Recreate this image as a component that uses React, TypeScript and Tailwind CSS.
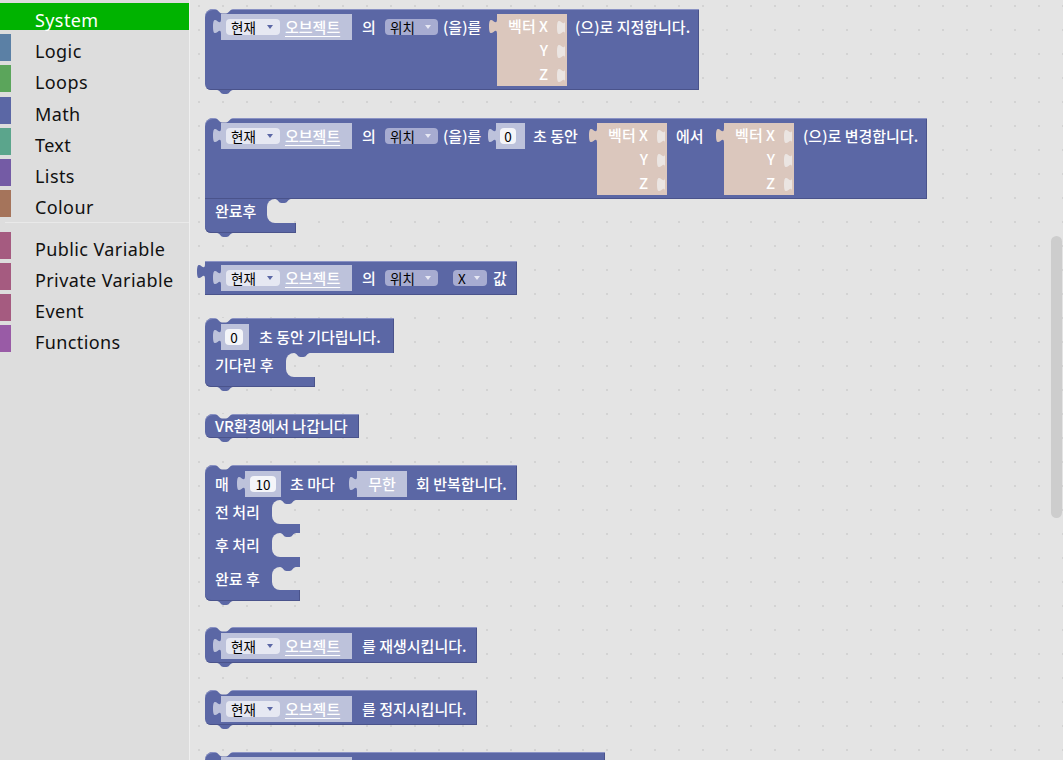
import type { ReactNode } from 'react';

const BLUE = '#5b67a5';
const SHADOW = '#bdc2db';
const TAN = '#dbc7bd';

const categories = [
  { name: 'Logic', color: 'bg-[#5b80a5]' },
  { name: 'Loops', color: 'bg-[#5ba55b]' },
  { name: 'Math', color: 'bg-[#5b67a5]' },
  { name: 'Text', color: 'bg-[#5ba58c]' },
  { name: 'Lists', color: 'bg-[#745ba5]' },
  { name: 'Colour', color: 'bg-[#a5745b]' },
];

const variables = [
  { name: 'Public Variable', color: 'bg-[#a55b80]' },
  { name: 'Private Variable', color: 'bg-[#a55b80]' },
  { name: 'Event', color: 'bg-[#a55b80]' },
  { name: 'Functions', color: 'bg-[#995ba6]' },
];

// puzzle tab "(" used for value inputs
function InTab({ fill, cls = '' }: { fill: string; cls?: string }) {
  return (
    <svg width="8" height="21" viewBox="0 0 8 21" className={`shrink-0 overflow-visible ${cls}`}>
      <path d="M8 5 C8 15 0 -3 0 12.5 C0 28 8 10 8 20 Z" fill={fill} />
    </svg>
  );
}

// notch cut into the top of a statement block
function Dip() {
  return (
    <svg width="18" height="5" viewBox="0 0 18 5" className="absolute top-0 left-[10px]">
      <path d="M0 0 C3 0 4 4.5 7 4.5 H11 C14 4.5 15 0 18 0 Z" fill="#e4e4e4" />
    </svg>
  );
}

// tab hanging below a statement block / into a statement input
function Tab({ cls }: { cls: string }) {
  return (
    <svg width="16" height="4" viewBox="0 0 16 4" className={`absolute ${cls}`}>
      <path d="M0 0 C3 0 3.5 4 6.5 4 H9.5 C12.5 4 13 0 16 0 Z" fill={BLUE} />
    </svg>
  );
}

function Arrow({ fill }: { fill: string }) {
  return (
    <svg width="6" height="4" viewBox="0 0 6 4" className="shrink-0">
      <path d="M0 0 H6 L3 4 Z" fill={fill} />
    </svg>
  );
}

const WHITE_TXT = 'text-[15px] leading-[18px] font-medium whitespace-nowrap text-white';

function Txt({ cls, children }: { cls: string; children: ReactNode }) {
  return <span className={`flex h-[26px] shrink-0 items-center ${WHITE_TXT} ${cls}`}>{children}</span>;
}

function Drop({ label, light = false, cls }: { label: string; light?: boolean; cls: string }) {
  return (
    <span className={`flex h-[26px] shrink-0 items-center ${cls}`}>
      <span
        className={`flex h-[16px] w-full items-center justify-between rounded-[4px] pr-[7px] pl-[5px] ${
          light ? 'bg-[#e6e8f2]' : 'bg-[#a7acd1]'
        }`}
      >
        <span className="text-[13.5px] leading-[16px] whitespace-nowrap text-black">{label}</span>
        <Arrow fill={light ? BLUE : '#e6e8f4'} />
      </span>
    </span>
  );
}

function Shadow({ outer = '', cls, children }: { outer?: string; cls: string; children?: ReactNode }) {
  return (
    <div className={`flex shrink-0 items-start ${outer}`}>
      <InTab fill={SHADOW} />
      <div className={`flex h-[26px] items-center bg-[#bdc2db] ${cls}`}>{children}</div>
    </div>
  );
}

function ObjBlock() {
  return (
    <Shadow cls="w-[131px]">
      <Drop label="현재" light cls="ml-[5px] w-[54px]" />
      <span className={`ml-[5px] underline underline-offset-[3px] ${WHITE_TXT}`}>오브젝트</span>
    </Shadow>
  );
}

function NumPill({ value, cls }: { value: string; cls: string }) {
  return (
    <span
      className={`flex h-[16px] items-center justify-center rounded-[4px] bg-[#f4f5f9] text-[13.5px] leading-[16px] text-black ${cls}`}
    >
      {value}
    </span>
  );
}

function Vec({ outer }: { outer: string }) {
  return (
    <div className={`flex shrink-0 items-start ${outer}`}>
      <InTab fill={TAN} />
      <div className="flex h-[72px] w-[70px] flex-col bg-[#dbc7bd]">
        {['벡터 X', 'Y', 'Z'].map((row) => (
          <div key={row} className="flex h-[24px] items-start justify-end">
            <span className={`flex h-[24px] items-center ${WHITE_TXT}`}>{row}</span>
            <InTab fill="#ebe5e2" cls="mt-[1px] mr-[2px] ml-[9px]" />
          </div>
        ))}
      </div>
    </div>
  );
}

function Block({ mt, children, notch = true }: { mt: string; children: ReactNode; notch?: boolean }) {
  return (
    <div className={`relative w-fit ${mt}`}>
      {children}
      {notch && <Dip />}
      {notch && <Tab cls="top-full left-[12px]" />}
    </div>
  );
}

function Arm({ label, labelW, h, tabLeft }: { label: string; labelW: string; h: string; tabLeft: string }) {
  return (
    <div className={`relative flex ${h}`}>
      <div className={`flex items-center bg-[#5b67a5] pl-[10px] ${WHITE_TXT} ${labelW}`}>{label}</div>
      <div className="w-[8px] bg-[#5b67a5]">
        <div className="h-full w-full rounded-l-[8px] bg-[#e4e4e4]" />
      </div>
      <Tab cls={`top-0 ${tabLeft}`} />
    </div>
  );
}

const TOP_EDGE = 'shadow-[inset_0_1px_0_#8a92c4,inset_-1px_0_0_#4a538b]';
const FULL_EDGE = 'shadow-[inset_0_1px_0_#8a92c4,inset_-1px_-1px_0_#4a538b]';
const BOTTOM_EDGE = 'shadow-[inset_0_-1px_0_#4a538b,inset_-1px_0_0_#4a538b]';

function Sidebar() {
  const label = "text-[18px] leading-[35px] tracking-[0.4px] whitespace-nowrap font-['Noto_Sans',sans-serif]";
  return (
    <div className="h-full w-[190px] shrink-0 border-r border-[#efefef] bg-[#dddddd] pt-[3px]">
      <div className={`mb-[4px] h-[27px] bg-[#00b300] pl-[35px] text-white ${label}`}>System</div>
      {categories.map((c) => (
        <div key={c.name} className="mb-[4.25px] flex h-[27px]">
          <div className={`h-full w-[11px] ${c.color}`} />
          <span className={`pl-[24px] text-[#111] ${label}`}>{c.name}</span>
        </div>
      ))}
      <div className="mt-[3px] mb-[9px] ml-[5px] h-px bg-[#e9e9e9]" />
      {variables.map((c) => (
        <div key={c.name} className="mb-[4.25px] flex h-[27px]">
          <div className={`h-full w-[11px] ${c.color}`} />
          <span className={`pl-[24px] text-[#111] ${label}`}>{c.name}</span>
        </div>
      ))}
    </div>
  );
}

function Flyout() {
  return (
    <div className="relative h-full flex-1 overflow-hidden bg-[#e4e4e4] bg-[radial-gradient(circle,#d3d3d3_1px,transparent_1.5px)] bg-size-[24px_24px] bg-position-[-3px_-6px] font-['Noto_Sans_CJK_KR','Noto_Sans',sans-serif]">
      <div className="flex flex-col items-start pt-[9px] pl-[15px]">
        {/* set position */}
        <Block mt="mt-0">
          <div className={`flex h-[81px] w-[494px] items-start rounded-tl-[8px] rounded-bl-[6px] bg-[#5b67a5] pt-[5px] pl-[8px] ${FULL_EDGE}`}>
            <ObjBlock />
            <Txt cls="ml-[10px] w-[13px]">의</Txt>
            <Drop label="위치" cls="ml-[10px] w-[53px]" />
            <Txt cls="ml-[5px] w-[36px]">(을)를</Txt>
            <Vec outer="ml-[10px]" />
            <Txt cls="ml-[8px] w-[114px]">(으)로 지정합니다.</Txt>
          </div>
        </Block>

        {/* change position over time */}
        <Block mt="mt-[28px]">
          <div className={`flex h-[81px] w-[722px] items-start rounded-tl-[8px] bg-[#5b67a5] pt-[5px] pl-[8px] ${FULL_EDGE}`}>
            <ObjBlock />
            <Txt cls="ml-[10px] w-[13px]">의</Txt>
            <Drop label="위치" cls="ml-[10px] w-[53px]" />
            <Txt cls="ml-[5px] w-[36px]">(을)를</Txt>
            <Shadow outer="ml-[9px]" cls="w-[29px]">
              <NumPill value="0" cls="ml-[4px] w-[16px]" />
            </Shadow>
            <Txt cls="ml-[8px] w-[45px]">초 동안</Txt>
            <Vec outer="ml-[11px]" />
            <Txt cls="ml-[9px] w-[26px]">에서</Txt>
            <Vec outer="ml-[14px]" />
            <Txt cls="ml-[9px] w-[115px]">(으)로 변경합니다.</Txt>
          </div>
          <Arm label="완료후" labelW="w-[62px]" h="h-[24px]" tabLeft="left-[70px]" />
          <div className={`h-[10px] w-[91px] rounded-bl-[6px] bg-[#5b67a5] ${BOTTOM_EDGE}`} />
        </Block>

        {/* get position value */}
        <Block mt="mt-[28px]" notch={false}>
          <div className={`flex h-[34px] w-[312px] items-start bg-[#5b67a5] pt-[4px] pl-[8px] ${FULL_EDGE}`}>
            <ObjBlock />
            <Txt cls="ml-[10px] w-[13px]">의</Txt>
            <Drop label="위치" cls="ml-[10px] w-[53px]" />
            <Drop label="X" cls="ml-[15px] w-[34px]" />
            <Txt cls="ml-[6px] w-[13px]">값</Txt>
          </div>
          <InTab fill={BLUE} cls="absolute top-[-2px] left-[-8px]" />
        </Block>

        {/* wait */}
        <Block mt="mt-[23px]">
          <div className={`flex h-[35px] w-[189px] items-start rounded-tl-[8px] bg-[#5b67a5] pt-[6px] pl-[8px] ${TOP_EDGE}`}>
            <Shadow cls="w-[28px]">
              <NumPill value="0" cls="ml-[4px] w-[18px]" />
            </Shadow>
            <Txt cls="ml-[10px] w-[125px]">초 동안 기다립니다.</Txt>
          </div>
          <Arm label="기다린 후" labelW="w-[81px]" h="h-[24px]" tabLeft="left-[89px]" />
          <div className={`h-[10px] w-[110px] rounded-bl-[6px] bg-[#5b67a5] ${BOTTOM_EDGE}`} />
        </Block>

        {/* exit VR */}
        <Block mt="mt-[27px]">
          <div className={`flex h-[24px] w-[154px] items-center rounded-tl-[8px] rounded-bl-[6px] bg-[#5b67a5] pl-[10px] ${FULL_EDGE}`}>
            <span className={WHITE_TXT}>VR환경에서 나갑니다</span>
          </div>
        </Block>

        {/* repeat every n seconds */}
        <Block mt="mt-[27px]">
          <div className={`flex h-[35px] w-[312px] items-start rounded-tl-[8px] bg-[#5b67a5] pt-[6px] pl-[10px] ${TOP_EDGE}`}>
            <Txt cls="w-[13px]">매</Txt>
            <Shadow outer="ml-[9px]" cls="w-[36px]">
              <NumPill value="10" cls="ml-[5px] w-[26px]" />
            </Shadow>
            <Txt cls="ml-[9px] w-[46px]">초 마다</Txt>
            <Shadow outer="ml-[13px]" cls="w-[50px] justify-center">
              <span className={WHITE_TXT}>무한</span>
            </Shadow>
            <Txt cls="ml-[9px] w-[91px]">회 반복합니다.</Txt>
          </div>
          <Arm label="전 처리" labelW="w-[67px]" h="h-[24px]" tabLeft="left-[75px]" />
          <div className="h-[9px] w-[95px] bg-[#5b67a5]" />
          <Arm label="후 처리" labelW="w-[67px]" h="h-[24px]" tabLeft="left-[75px]" />
          <div className="h-[10px] w-[95px] bg-[#5b67a5]" />
          <Arm label="완료 후" labelW="w-[67px]" h="h-[23px]" tabLeft="left-[75px]" />
          <div className={`h-[11px] w-[95px] rounded-bl-[6px] bg-[#5b67a5] ${BOTTOM_EDGE}`} />
        </Block>

        {/* play */}
        <Block mt="mt-[26px]">
          <div className={`flex h-[36px] w-[272px] items-start rounded-tl-[8px] rounded-bl-[6px] bg-[#5b67a5] pt-[6px] pl-[8px] ${FULL_EDGE}`}>
            <ObjBlock />
            <Txt cls="ml-[10px] w-[105px]">를 재생시킵니다.</Txt>
          </div>
        </Block>

        {/* stop */}
        <Block mt="mt-[27px]">
          <div className={`flex h-[35px] w-[272px] items-start rounded-tl-[8px] rounded-bl-[6px] bg-[#5b67a5] pt-[6px] pl-[8px] ${FULL_EDGE}`}>
            <ObjBlock />
            <Txt cls="ml-[10px] w-[105px]">를 정지시킵니다.</Txt>
          </div>
        </Block>

        {/* next block, only its top edge is inside the window */}
        <Block mt="mt-[27px]">
          <div className={`flex h-[40px] w-[400px] items-start rounded-tl-[8px] bg-[#5b67a5] pt-[5px] pl-[8px] ${TOP_EDGE}`}>
            <Shadow cls="w-[131px]" />
          </div>
        </Block>
      </div>

      {/* scrollbar */}
      <div className="absolute top-[236px] right-[1px] h-[282px] w-[11px] rounded-full bg-[#cdcdcd]" />
    </div>
  );
}

export default function App() {
  return (
    <div className="flex h-[760px] w-full overflow-hidden bg-[#e4e4e4]">
      <Sidebar />
      <Flyout />
    </div>
  );
}
